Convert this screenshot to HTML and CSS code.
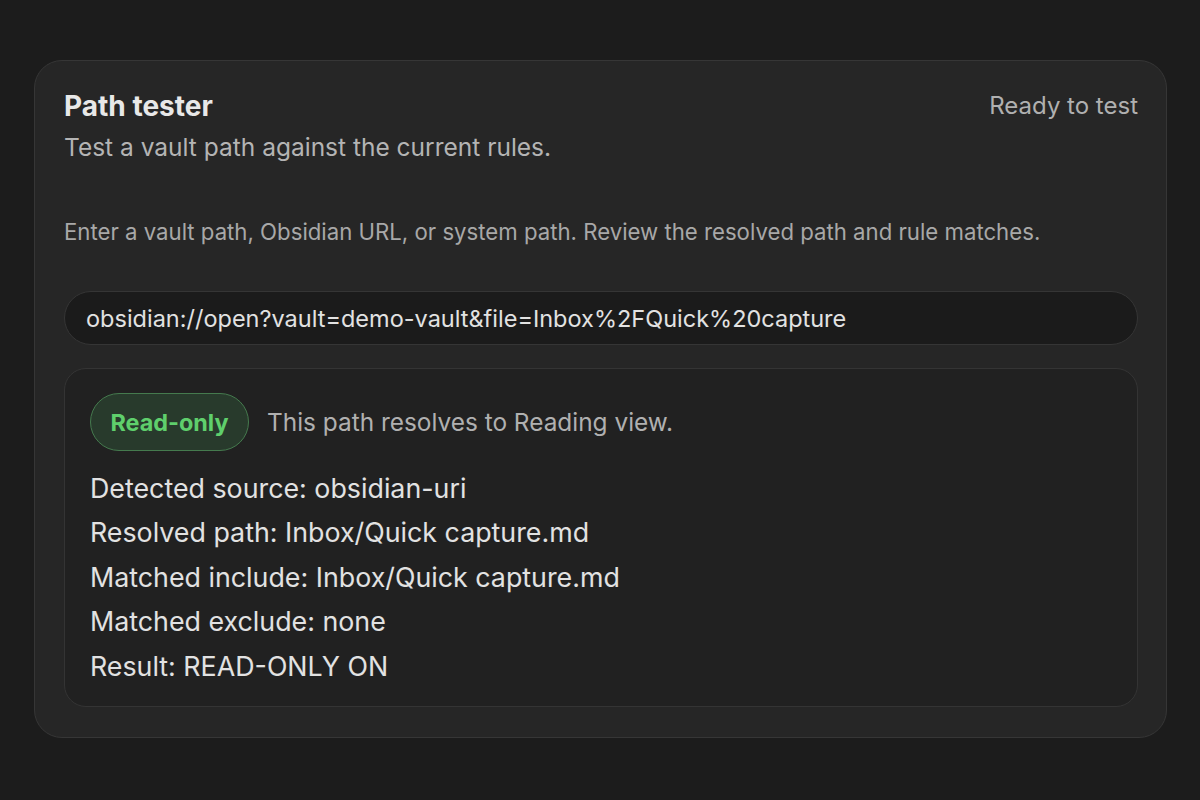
FILE: index.html
```html
<!DOCTYPE html>
<html lang="en">
<head>
<meta charset="utf-8">
<title>Path tester</title>
<link rel="stylesheet" href="styles.css">
</head>
<body>
<section class="card">
  <header class="card-head">
    <div class="head-text">
      <h2 class="title">Path tester</h2>
      <p class="subtitle">Test a vault path against the current rules.</p>
    </div>
    <span class="status">Ready to test</span>
  </header>
  <p class="help">Enter a vault path, Obsidian URL, or system path. Review the resolved path and rule matches.</p>
  <input class="path-input" type="text" value="obsidian://open?vault=demo-vault&amp;file=Inbox%2FQuick%20capture">
  <div class="result">
    <div class="result-head">
      <span class="badge">Read-only</span>
      <span class="result-note">This path resolves to Reading view.</span>
    </div>
    <ul class="details">
      <li>Detected source: obsidian-uri</li>
      <li>Resolved path: Inbox/Quick capture.md</li>
      <li>Matched include: Inbox/Quick capture.md</li>
      <li>Matched exclude: none</li>
      <li>Result: READ-ONLY ON</li>
    </ul>
  </div>
</section>
</body>
</html>
```

FILE: styles.css
```css
html, body {
  margin: 0;
  padding: 0;
  background: #1c1c1c;
}
body {
  padding: 60px 33px 0 34px;
  font-family: Inter, "Noto Sans", "Liberation Sans", sans-serif;
  color: #dcdcdc;
}
.card {
  background: #262626;
  border: 1px solid #363636;
  border-radius: 28px;
  padding: 28px 28px 30px 29px;
  display: flex;
  flex-direction: column;
}
.card-head {
  display: flex;
  justify-content: space-between;
  align-items: flex-start;
}
.title {
  margin: 0;
  font-size: 28px;
  line-height: 34px;
  font-weight: 700;
  color: #e8e8e8;
}
.subtitle {
  margin: 10px 0 0;
  font-size: 24.5px;
  line-height: 28px;
  color: #b4b4b4;
}
.status {
  font-size: 24px;
  line-height: 34px;
  color: #b0b0b0;
}
.help {
  margin: 58px 0 0;
  font-size: 22.2px;
  line-height: 26px;
  color: #a8a8a8;
}
.path-input {
  margin-top: 46px;
  height: 54px;
  box-sizing: border-box;
  border: 1px solid #353535;
  border-radius: 27px;
  background: #1b1b1b;
  padding: 0 20px 0 21px;
  font-family: inherit;
  font-size: 23.5px;
  color: #e2e2e2;
  outline: none;
}
.result {
  margin-top: 23px;
  border: 1px solid #343434;
  border-radius: 22px;
  background: #212121;
  padding: 24px 24px 18px 25px;
}
.result-head {
  display: flex;
  align-items: center;
  gap: 18px;
}
.badge {
  box-sizing: border-box;
  height: 58px;
  width: 159px;
  display: inline-flex;
  align-items: center;
  justify-content: center;
  border-radius: 29px;
  border: 1px solid #457a4e;
  background: #283a2c;
  color: #5fcf6c;
  font-size: 23.4px;
  font-weight: 700;
}
.result-note {
  font-size: 24.4px;
  color: #b0b0b0;
}
.details {
  list-style: none;
  margin: 15px 0 0;
  padding: 0;
}
.details li {
  font-size: 26.8px;
  line-height: 44.4px;
  color: #e2e2e2;
}
```
